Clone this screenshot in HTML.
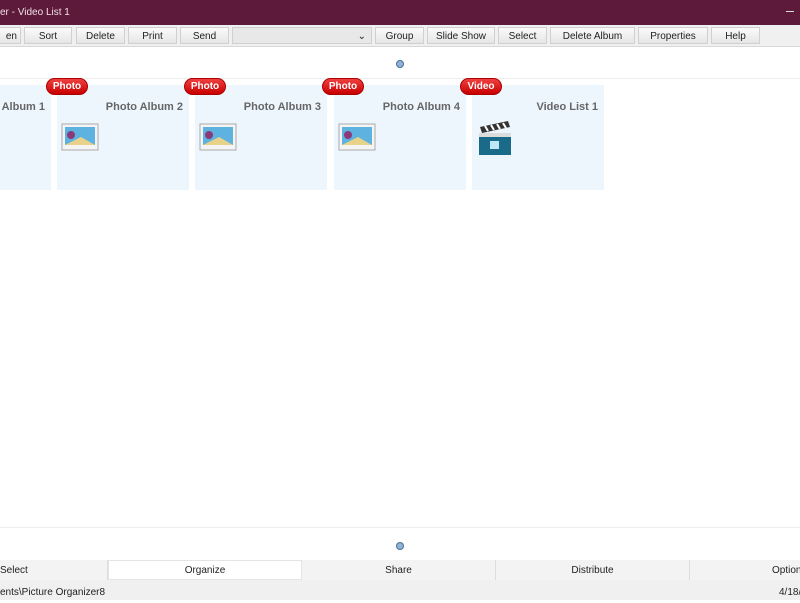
<!DOCTYPE html>
<html><head><style>
*{margin:0;padding:0;box-sizing:border-box}
body{width:800px;height:600px;overflow:hidden;background:#fff;font-family:"Liberation Sans",sans-serif;position:relative}
.abs{position:absolute}
#title{left:0;top:0;width:800px;height:25px;background:#5d1a3a;color:#f0e0e8;font-size:10px;line-height:25px;padding-left:0}
#tb{left:0;top:25px;width:800px;height:22px;background:#f0f0f0;border-bottom:1px solid #d8d8d8}
.btn{position:absolute;top:2px;height:17px;background:linear-gradient(#fafafa,#e6e6e6);border:1px solid #d0d0d0;font-size:10px;line-height:17px;text-align:center;color:#222}
.tile{position:absolute;top:85px;width:132px;height:105px;background:#edf6fd}
.tile .t{position:absolute;right:6px;top:16px;font-size:11px;font-weight:bold;color:#666}
.badge{position:absolute;top:78px;width:42px;height:17px;border-radius:9px;background:linear-gradient(#f04040,#c80000);color:#fff;font-size:10px;font-weight:bold;text-align:center;line-height:15px;border:1px solid #a00}
.dot{position:absolute;width:8px;height:8px;border-radius:50%;background:#8fb3d6;border:1px solid #4a6f94}
.tab{position:absolute;top:560px;height:20px;font-size:10px;line-height:20px;padding-top:1px;text-align:center;color:#222;background:#f3f3f3;border-right:1px solid #ddd}
</style></head><body>
<div id="title" class="abs">er - Video List 1</div>
<div class="abs" style="right:6px;top:11px;width:8px;height:1px;background:#ddd"></div>
<div id="tb" class="abs">
<div class="btn" style="left:-2px;width:23px;text-align:right;padding-right:3px">en</div>
<div class="btn" style="left:24px;width:48px">Sort</div>
<div class="btn" style="left:76px;width:49px">Delete</div>
<div class="btn" style="left:128px;width:49px">Print</div>
<div class="btn" style="left:180px;width:49px">Send</div>
<div class="btn" style="left:232px;width:140px;background:#e8e8e8;text-align:right;padding-right:5px">&#8964;</div>
<div class="btn" style="left:375px;width:49px">Group</div>
<div class="btn" style="left:427px;width:68px">Slide Show</div>
<div class="btn" style="left:498px;width:49px">Select</div>
<div class="btn" style="left:550px;width:85px">Delete Album</div>
<div class="btn" style="left:638px;width:70px">Properties</div>
<div class="btn" style="left:711px;width:49px">Help</div>
</div>
<div class="dot" style="left:396px;top:60px"></div>
<div class="abs" style="left:0;top:78px;width:800px;height:1px;background:#eee"></div>
<div class="tile" style="left:-81px"><div class="t">Photo Album 1</div></div>
<div class="tile" style="left:57px"><div class="t">Photo Album 2</div></div>
<div class="tile" style="left:195px"><div class="t">Photo Album 3</div></div>
<div class="tile" style="left:334px"><div class="t">Photo Album 4</div></div>
<div class="tile" style="left:472px"><div class="t">Video List 1</div></div>
<div class="badge" style="left:46px">Photo</div>
<div class="badge" style="left:184px">Photo</div>
<div class="badge" style="left:322px">Photo</div>
<div class="badge" style="left:460px">Video</div>
<svg class="abs" style="left:61px;top:123px" width="38" height="28"><rect x="1" y="1" width="36" height="26" fill="#f4f4f4" stroke="#aaa"/><rect x="4" y="4" width="30" height="18" fill="#5eb2e0"/><path d="M4 22 L20 14 L34 22Z" fill="#e8d28a"/><circle cx="10" cy="12" r="4" fill="#8a3a7a"/></svg>
<svg class="abs" style="left:199px;top:123px" width="38" height="28"><rect x="1" y="1" width="36" height="26" fill="#f4f4f4" stroke="#aaa"/><rect x="4" y="4" width="30" height="18" fill="#5eb2e0"/><path d="M4 22 L20 14 L34 22Z" fill="#e8d28a"/><circle cx="10" cy="12" r="4" fill="#8a3a7a"/></svg>
<svg class="abs" style="left:338px;top:123px" width="38" height="28"><rect x="1" y="1" width="36" height="26" fill="#f4f4f4" stroke="#aaa"/><rect x="4" y="4" width="30" height="18" fill="#5eb2e0"/><path d="M4 22 L20 14 L34 22Z" fill="#e8d28a"/><circle cx="10" cy="12" r="4" fill="#8a3a7a"/></svg>
<svg class="abs" style="left:478px;top:119px" width="34" height="38"><path d="M2 8 L30 2 L32 8 L4 14Z" fill="#333"/><path d="M7 7 l3 5 M13 6 l3 5 M19 5 l3 5 M25 4 l3 5" stroke="#fff" stroke-width="2"/><rect x="1" y="14" width="32" height="22" fill="#1a6a8a"/><rect x="1" y="14" width="32" height="4" fill="#ddd"/><rect x="12" y="22" width="9" height="8" fill="#bfe6f5"/></svg>
<div class="abs" style="left:0;top:527px;width:800px;height:1px;background:#eee"></div>
<div class="dot" style="left:396px;top:542px"></div>
<div class="tab" style="left:0;width:108px;text-align:left">Select</div>
<div class="tab" style="left:108px;width:194px;background:#fff;border:1px solid #e4e4e4;padding-top:0">Organize</div>
<div class="tab" style="left:302px;width:194px">Share</div>
<div class="tab" style="left:496px;width:194px">Distribute</div>
<div class="tab" style="left:690px;width:120px;text-align:left;padding-left:82px">Options</div>
<div class="abs" style="left:0;top:580px;width:800px;height:20px;background:#f0f0f0;font-size:10px;line-height:20px;padding-top:3px;color:#222">ents\Picture Organizer8<span style="position:absolute;left:779px">4/18/</span></div>
</body></html>
